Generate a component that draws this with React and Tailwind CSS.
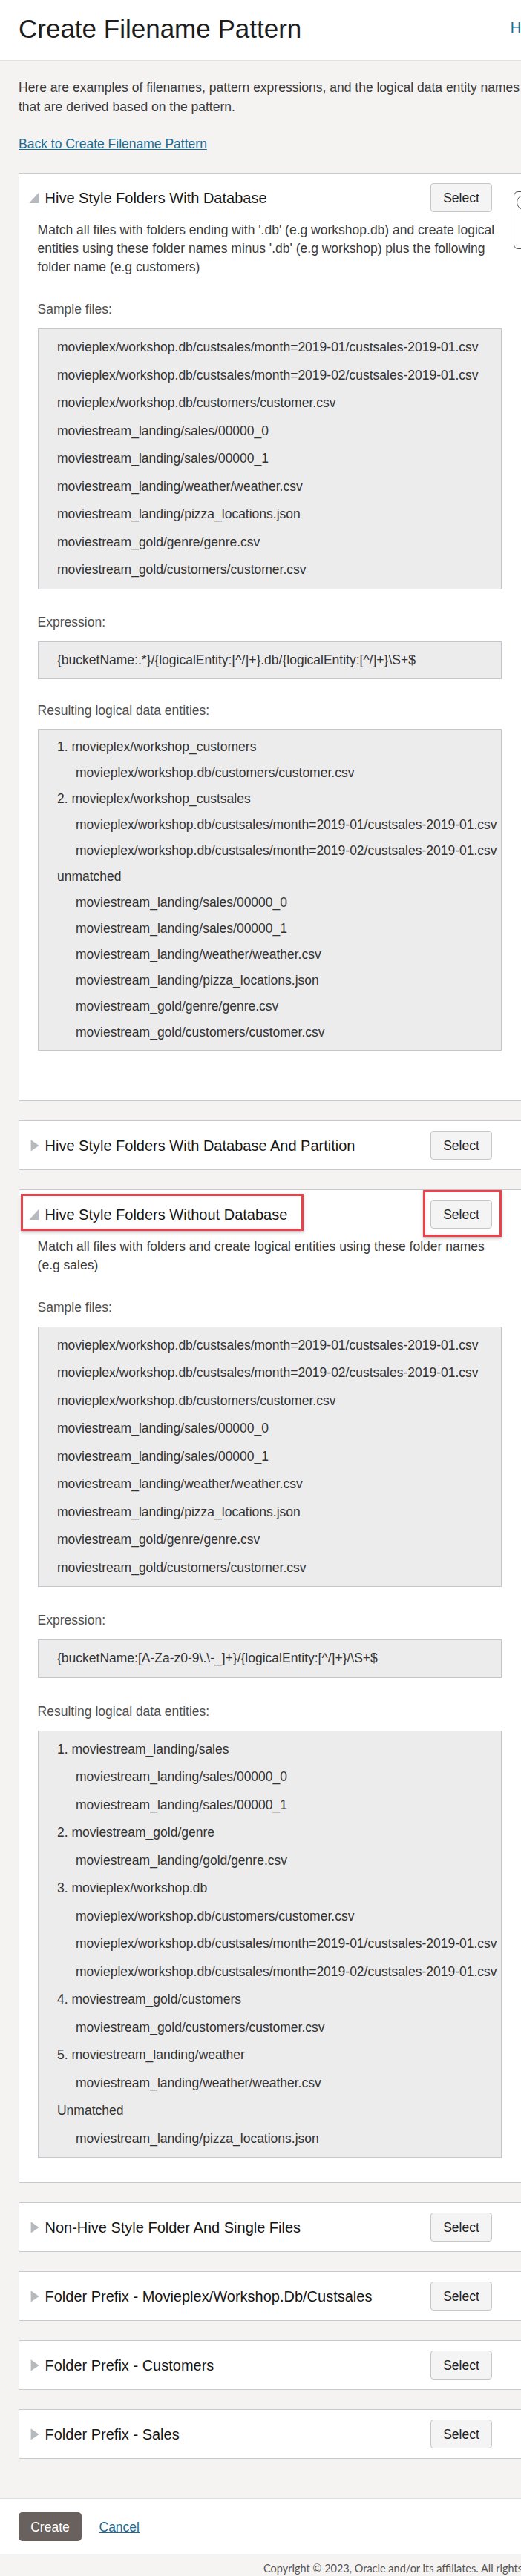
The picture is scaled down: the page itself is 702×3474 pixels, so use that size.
import React from 'react'

const sampleFiles = [
  'movieplex/workshop.db/custsales/month=2019-01/custsales-2019-01.csv',
  'movieplex/workshop.db/custsales/month=2019-02/custsales-2019-01.csv',
  'movieplex/workshop.db/customers/customer.csv',
  'moviestream_landing/sales/00000_0',
  'moviestream_landing/sales/00000_1',
  'moviestream_landing/weather/weather.csv',
  'moviestream_landing/pizza_locations.json',
  'moviestream_gold/genre/genre.csv',
  'moviestream_gold/customers/customer.csv',
].map(text => ({text}))

const withDbResults = [
  {text: '1. movieplex/workshop_customers'},
  {text: 'movieplex/workshop.db/customers/customer.csv', sub: true},
  {text: '2. movieplex/workshop_custsales'},
  {text: 'movieplex/workshop.db/custsales/month=2019-01/custsales-2019-01.csv', sub: true},
  {text: 'movieplex/workshop.db/custsales/month=2019-02/custsales-2019-01.csv', sub: true},
  {text: 'unmatched'},
  {text: 'moviestream_landing/sales/00000_0', sub: true},
  {text: 'moviestream_landing/sales/00000_1', sub: true},
  {text: 'moviestream_landing/weather/weather.csv', sub: true},
  {text: 'moviestream_landing/pizza_locations.json', sub: true},
  {text: 'moviestream_gold/genre/genre.csv', sub: true},
  {text: 'moviestream_gold/customers/customer.csv', sub: true},
]

const withoutDbResults = [
  {text: '1. moviestream_landing/sales'},
  {text: 'moviestream_landing/sales/00000_0', sub: true},
  {text: 'moviestream_landing/sales/00000_1', sub: true},
  {text: '2. moviestream_gold/genre'},
  {text: 'moviestream_landing/gold/genre.csv', sub: true},
  {text: '3. movieplex/workshop.db'},
  {text: 'movieplex/workshop.db/customers/customer.csv', sub: true},
  {text: 'movieplex/workshop.db/custsales/month=2019-01/custsales-2019-01.csv', sub: true},
  {text: 'movieplex/workshop.db/custsales/month=2019-02/custsales-2019-01.csv', sub: true},
  {text: '4. moviestream_gold/customers'},
  {text: 'moviestream_gold/customers/customer.csv', sub: true},
  {text: '5. moviestream_landing/weather'},
  {text: 'moviestream_landing/weather/weather.csv', sub: true},
  {text: 'Unmatched'},
  {text: 'moviestream_landing/pizza_locations.json', sub: true},
]

const collapsedPatterns = [
  'Non-Hive Style Folder And Single Files',
  'Folder Prefix - Movieplex/Workshop.Db/Custsales',
  'Folder Prefix - Customers',
  'Folder Prefix - Sales',
]

const Arrow = ({open}) => (
  <svg width="14" height="16" viewBox="0 0 14 16" className="shrink-0">
    {open
      ? <path d="M13.5 0.6 L13.5 15 L0.2 15 Z" fill="#b6babe" />
      : <path d="M2.6 0.2 L13.6 7.9 L2.6 15.6 Z" fill="#b6babe" />}
  </svg>
)

const SelectButton = () => (
  <button className="h-[39px] w-[83px] shrink-0 rounded-[4px] border border-[#c4c6c9] bg-[#f4f4f4] text-[17.5px] font-normal text-[#222]">
    Select
  </button>
)

const Label = ({children, className = ''}) => (
  <p className={`text-[17.5px] leading-[25px] text-[#505050] ${className}`}>{children}</p>
)

const FileBox = ({items, row = 'leading-[37.5px]', className = ''}) => (
  <div className={`border border-[#c3c6ca] bg-[#ececec] py-[6px] pl-[25.4px] ${className}`}>
    {items.map((item, i) => (
      <div key={i} className={`whitespace-nowrap text-[17.5px] text-[#333] ${row} ${item.sub ? 'pl-[25px]' : ''}`}>
        {item.text}
      </div>
    ))}
  </div>
)

const PatternCard = ({title, open = false, highlight = false, bodyClass = '', children}) => (
  <section className="relative mt-[26px] border border-[#c6c9cd] bg-white first:mt-0">
    <div className={`flex items-center justify-between pl-[13px] pr-[65px] pt-[13px] ${open ? 'pb-[11.5px]' : 'pb-[13px]'}`}>
      <div className="flex items-center gap-[7.5px]">
        <Arrow open={open} />
        <h2 className="text-[20px] font-normal leading-[24px] text-[#161513]">{title}</h2>
      </div>
      <SelectButton />
    </div>
    {open && <div className={`pl-[24.6px] pr-[52px] ${bodyClass}`}>{children}</div>}
    {highlight && (
      <>
        {/* screenshot annotation boxes */}
        <div className="pointer-events-none absolute left-[2px] top-[5px] h-[50px] w-[381px] border-[3px] border-[#e8424b] shadow-[0_2px_4px_rgba(0,0,0,0.25)]" />
        <div className="pointer-events-none absolute left-[544px] top-0 h-[63px] w-[106px] border-[3px] border-[#e8424b] shadow-[0_2px_4px_rgba(0,0,0,0.25)]" />
      </>
    )}
  </section>
)

export default function App() {
  return (
    <div className="relative w-full overflow-hidden font-['Liberation_Sans',Arial,sans-serif]">
      <div className="w-[754px]">
        <header className="flex h-[82px] items-start justify-between border-b border-[#e2e2e2] bg-white px-[25px]">
          <h1 className="mt-[19px] text-[35px] font-normal leading-[40px] text-[#1d1d1d]">Create Filename Pattern</h1>
          <a href="#" className="mt-[25px] text-[20px] leading-[24px] text-[#1b6a93]">Help</a>
        </header>

        <main className="bg-[#f4f3f2] px-[25px] pb-[53px] pt-[24px]">
          <p className="text-[17.5px] leading-[25.7px] text-[#3a3a3a]">
            Here are examples of filenames, pattern expressions, and the logical data entity names that are derived based on the pattern.
          </p>
          <p className="mt-[24.3px] text-[17.5px] leading-[25.7px]">
            <a href="#" className="text-[#1b6a93] underline">Back to Create Filename Pattern</a>
          </p>

          <div className="mt-[26px]">
            <PatternCard title="Hive Style Folders With Database" open bodyClass="pb-[67px]">
              <p className="text-[17.5px] leading-[25px] text-[#3a3a3a]">
                Match all files with folders ending with '.db' (e.g workshop.db) and create logical entities using these folder names minus '.db' (e.g workshop) plus the following folder name (e.g customers)
              </p>
              <Label className="mt-[32.5px]">Sample files:</Label>
              <FileBox items={sampleFiles} className="mt-[13px]" />
              <Label className="mt-[32px]">Expression:</Label>
              <FileBox items={[{text: '{bucketName:.*}/{logicalEntity:[^/]+}.db/{logicalEntity:[^/]+}\\S+$'}]} className="mt-[13px]" />
              <Label className="mt-[30px]">Resulting logical data entities:</Label>
              <FileBox items={withDbResults} row="leading-[35px]" className="mt-[12px]" />
            </PatternCard>

            <PatternCard title="Hive Style Folders With Database And Partition" />

            <PatternCard title="Hive Style Folders Without Database" open highlight bodyClass="pb-[33px]">
              <p className="text-[17.5px] leading-[25px] text-[#3a3a3a]">
                Match all files with folders and create logical entities using these folder names (e.g sales)
              </p>
              <Label className="mt-[32px]">Sample files:</Label>
              <FileBox items={sampleFiles} className="mt-[13px]" />
              <Label className="mt-[33px]">Expression:</Label>
              <FileBox items={[{text: '{bucketName:[A-Za-z0-9\\.\\-_]+}/{logicalEntity:[^/]+}/\\S+$'}]} className="mt-[13px]" />
              <Label className="mt-[33px]">Resulting logical data entities:</Label>
              <FileBox items={withoutDbResults} className="mt-[13px]" />
            </PatternCard>

            {collapsedPatterns.map(name => (
              <PatternCard key={name} title={name} />
            ))}
          </div>
        </main>

        <div className="flex items-center gap-[23.5px] border-t border-[#dedede] bg-white px-[25px] pb-[17px] pt-[18px]">
          <button className="h-[39px] w-[85px] rounded-[5px] bg-[#69615d] text-[17.5px] text-white">Create</button>
          <a href="#" className="text-[17.5px] text-[#1b6a93] underline">Cancel</a>
        </div>

        <footer className="h-[40px] whitespace-nowrap border-t border-[#d9d9d9] bg-[#f5f4f2] pl-[355px] pt-[9px] font-['Lato',Arial,sans-serif] text-[14.5px] leading-[20px] text-[#555]">
          Copyright © 2023, Oracle and/or its affiliates. All rights reserved.
        </footer>
      </div>

      {/* edge of a floating help tab, partly off screen */}
      <div className="absolute left-[692px] top-[258px] h-[78px] w-[40px] rounded-[6px] border-[1.5px] border-[#555] bg-white">
        <div className="ml-[3px] mt-[4px] h-[20px] w-[20px] rounded-full border-[1.5px] border-[#555]" />
      </div>
    </div>
  )
}
